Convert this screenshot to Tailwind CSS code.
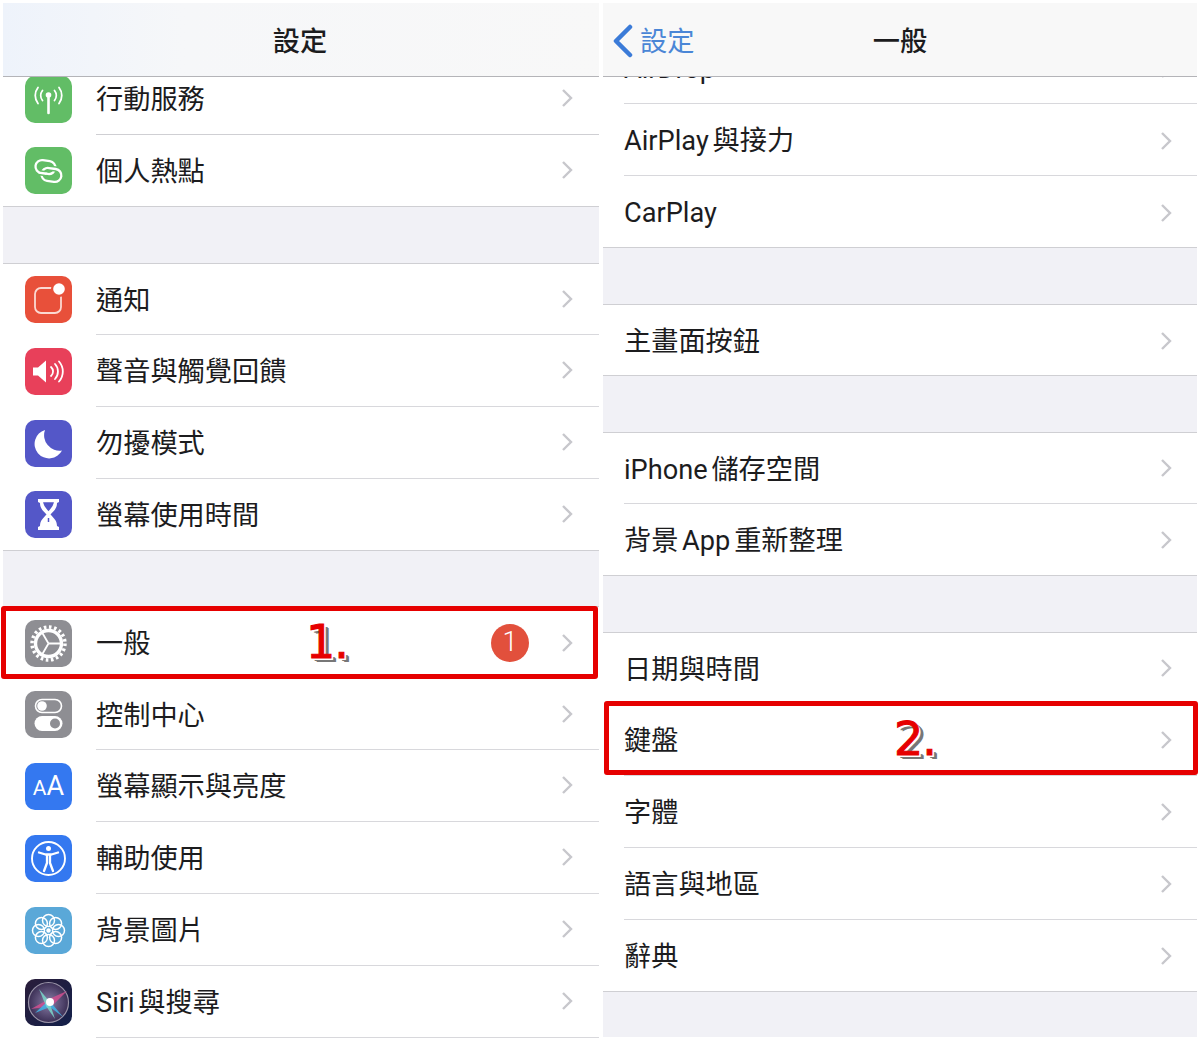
<!DOCTYPE html>
<html lang="zh-Hant">
<head>
<meta charset="UTF-8">
<title>設定</title>
<script src="https://cdn.jsdelivr.net/npm/@tailwindcss/browser@4"></script>
</head>
<body class="bg-white font-['Roboto','Noto_Sans_CJK_TC',sans-serif] text-[27.2px] leading-none [word-spacing:-3px] text-[#1c1c1e]">
<div class="flex gap-[4px] p-[3px] w-[1200px] h-[1040px] overflow-hidden">

  <!-- left: settings -->
  <div class="w-[596px] h-[1034px] bg-[#f1f1f6]">
    <div class="h-[74px] pt-[7px] pr-[2px] bg-gradient-to-r from-[#eef3fb] via-[#f6f7f9] via-30% to-[#f8f8f8] border-b border-[#b4b4b8] flex items-center justify-center font-medium">設定</div>

    <div class="overflow-hidden">
    <div class="-mt-[14px] bg-white border-b border-[#cfcfd3]">
      <div class="h-[72px] flex items-center pl-[22px]">
        <svg class="w-[47px] h-[47px] shrink-0" viewBox="0 0 47 47"><rect width="47" height="47" rx="10" fill="#62bd66"/><g fill="none" stroke="#fff" stroke-linecap="round"><path d="M23.5 20v17" stroke-width="2.6"/><path d="M17.5 14.5a8 8 0 0 0 0 10M29.5 14.5a8 8 0 0 1 0 10" stroke-width="1.8"/><path d="M13 11.5a13 13 0 0 0 0 16M34 11.5a13 13 0 0 1 0 16" stroke-width="1.8"/></g><circle cx="23.5" cy="19" r="2.8" fill="#fff"/></svg>
        <div class="ml-[24px] flex-1 h-full flex items-center justify-between pr-[26px] border-b border-[#cfcfd3]"><span class="pt-[5px]">行動服務</span><svg class="w-[12px] h-[20px] mb-[1px]" viewBox="0 0 12 20"><path d="M2 2l8 8-8 8" fill="none" stroke="#c7c7cc" stroke-width="2.4"/></svg></div>
      </div>
      <div class="h-[71px] flex items-center pl-[22px]">
        <svg class="w-[47px] h-[47px] shrink-0" viewBox="0 0 47 47"><rect width="47" height="47" rx="10" fill="#62bd66"/><g fill="none" transform="rotate(8 23.5 23.5)"><rect x="10" y="14" width="20" height="13" rx="6.500" stroke="#fff" stroke-width="2.300"/><path d="M26 21h6" stroke="#62bd66" stroke-width="5.500"/><rect x="17" y="21" width="20" height="13" rx="6.500" stroke="#fff" stroke-width="2.300"/><path d="M15 27h6" stroke="#62bd66" stroke-width="5.500"/><path d="M14 27h8" stroke="#fff" stroke-width="2.300"/></g></svg>
        <div class="ml-[24px] flex-1 h-full flex items-center justify-between pr-[26px]"><span class="pt-[5px]">個人熱點</span><svg class="w-[12px] h-[20px] mb-[1px]" viewBox="0 0 12 20"><path d="M2 2l8 8-8 8" fill="none" stroke="#c7c7cc" stroke-width="2.4"/></svg></div>
      </div>
    </div>
    </div>

    <div class="mt-[56px] bg-white border-y border-[#cfcfd3]">
      <div class="h-[71px] flex items-center pl-[22px]">
        <svg class="w-[47px] h-[47px] shrink-0" viewBox="0 0 47 47"><rect width="47" height="47" rx="10" fill="#e8503a"/><rect x="10" y="12" width="26" height="25" rx="6" fill="none" stroke="#fbd9d2" stroke-width="1.8"/><circle cx="34" cy="13" r="8" fill="#e8503a"/><circle cx="34" cy="13" r="5.800" fill="#fff"/></svg>
        <div class="ml-[24px] flex-1 h-full flex items-center justify-between pr-[26px] border-b border-[#d8d8dc]"><span class="pt-[5px]">通知</span><svg class="w-[12px] h-[20px] mb-[1px]" viewBox="0 0 12 20"><path d="M2 2l8 8-8 8" fill="none" stroke="#c7c7cc" stroke-width="2.4"/></svg></div>
      </div>
      <div class="h-[72px] flex items-center pl-[22px]">
        <svg class="w-[47px] h-[47px] shrink-0" viewBox="0 0 47 47"><rect width="47" height="47" rx="10" fill="#e8405a"/><path d="M8 19.500h5l8-7v22l-8-7H8z" fill="#fff"/><g fill="none" stroke="#fff" stroke-width="1.800" stroke-linecap="round"><path d="M26 19a6 6 0 0 1 0 9"/><path d="M30 16a11 11 0 0 1 0 15"/><path d="M34 13.500a15 15 0 0 1 0 20"/></g></svg>
        <div class="ml-[24px] flex-1 h-full flex items-center justify-between pr-[26px] border-b border-[#d8d8dc]"><span class="pt-[5px]">聲音與觸覺回饋</span><svg class="w-[12px] h-[20px] mb-[1px]" viewBox="0 0 12 20"><path d="M2 2l8 8-8 8" fill="none" stroke="#c7c7cc" stroke-width="2.4"/></svg></div>
      </div>
      <div class="h-[72px] flex items-center pl-[22px]">
        <svg class="w-[47px] h-[47px] shrink-0" viewBox="0 0 47 47"><rect width="47" height="47" rx="10" fill="#5457c8"/><path d="M20 10a14.500 14.500 0 1 0 17 20.500A15.500 15.500 0 0 1 20 10z" fill="#fff"/></svg>
        <div class="ml-[24px] flex-1 h-full flex items-center justify-between pr-[26px] border-b border-[#d8d8dc]"><span class="pt-[5px]">勿擾模式</span><svg class="w-[12px] h-[20px] mb-[1px]" viewBox="0 0 12 20"><path d="M2 2l8 8-8 8" fill="none" stroke="#c7c7cc" stroke-width="2.4"/></svg></div>
      </div>
      <div class="h-[71px] flex items-center pl-[22px]">
        <svg class="w-[47px] h-[47px] shrink-0" viewBox="0 0 47 47"><rect width="47" height="47" rx="10" fill="#5457c8"/><path d="M13 8h21v3l-2 1c0 6-4 8.500-6.500 11.500C28 26.500 32 29 32 35l2 1v3H13v-3l2-1c0-6 4-8.500 6.500-11.500C19 20.500 15 18 15 12l-2-1z" fill="#fff"/><path d="M19 12h9c-.5 3-3 5-4.500 7C22 17 19.500 15 19 12zM23.500 27v4" fill="#5457c8" stroke="#5457c8" stroke-width="1.500"/></svg>
        <div class="ml-[24px] flex-1 h-full flex items-center justify-between pr-[26px]"><span class="pt-[5px]">螢幕使用時間</span><svg class="w-[12px] h-[20px] mb-[1px]" viewBox="0 0 12 20"><path d="M2 2l8 8-8 8" fill="none" stroke="#c7c7cc" stroke-width="2.4"/></svg></div>
      </div>
    </div>

    <div class="mt-[55px] bg-white border-t border-[#cfcfd3]">
      <div class="relative h-[72px] flex items-center pl-[22px]">
        <svg class="w-[47px] h-[47px] shrink-0" viewBox="0 0 47 47"><rect width="47" height="47" rx="10" fill="#8e8e93"/><g fill="none" stroke="#fff"><circle cx="23.500" cy="23.500" r="16.500" stroke-width="3.500" stroke-dasharray="2.600 2.580"/><circle cx="23.500" cy="23.500" r="13" stroke-width="3.400"/><path d="M23.500 23.500H37M23.500 23.500L16.500 11.500M23.500 23.500L16.500 35.500" stroke-width="1.800"/></g></svg>
        <div class="ml-[24px] flex-1 h-full flex items-center pr-[26px]"><span class="pt-[3px]">一般</span><span class="ml-auto mr-[32px] w-[38px] h-[38px] rounded-full bg-[#e2503c] text-white flex items-center justify-center font-light">1</span><svg class="w-[12px] h-[20px] mb-[1px]" viewBox="0 0 12 20"><path d="M2 2l8 8-8 8" fill="none" stroke="#c7c7cc" stroke-width="2.4"/></svg></div>
        <div class="absolute -left-[2px] -top-[1px] w-[597px] h-[73px] border-[5px] border-[#e60000] rounded-[3px]"></div>
        <span class="absolute left-[303px] top-[5px] text-[46px] leading-[60px] tracking-[-1px] font-['DejaVu_Sans',sans-serif] text-[#e60000] [-webkit-text-stroke:1px_#e60000] [text-shadow:2px_2px_0_#fff,3px_3px_0_#777,4px_3px_0_#777,5px_4px_0_#777]">1.</span>
      </div>
      <div class="h-[71px] flex items-center pl-[22px]">
        <svg class="w-[47px] h-[47px] shrink-0" viewBox="0 0 47 47"><rect width="47" height="47" rx="10" fill="#8e8e93"/><rect x="10.500" y="8.500" width="26" height="13" rx="6.500" fill="none" stroke="#fff" stroke-width="1.600"/><circle cx="17" cy="15" r="4.800" fill="#fff"/><rect x="9.500" y="25" width="28" height="15" rx="7.500" fill="#fff"/><circle cx="30" cy="32.500" r="5" fill="#8e8e93"/></svg>
        <div class="ml-[24px] flex-1 h-full flex items-center justify-between pr-[26px] border-b border-[#d8d8dc]"><span class="pt-[5px]">控制中心</span><svg class="w-[12px] h-[20px] mb-[1px]" viewBox="0 0 12 20"><path d="M2 2l8 8-8 8" fill="none" stroke="#c7c7cc" stroke-width="2.4"/></svg></div>
      </div>
      <div class="h-[72px] flex items-center pl-[22px]">
        <div class="w-[47px] h-[47px] shrink-0 rounded-[10px] bg-[#3478f0] text-white flex items-baseline justify-center pt-[10px]"><span class="text-[21px]">A</span><span class="text-[27px]">A</span></div>
        <div class="ml-[24px] flex-1 h-full flex items-center justify-between pr-[26px] border-b border-[#d8d8dc]"><span class="pt-[5px]">螢幕顯示與亮度</span><svg class="w-[12px] h-[20px] mb-[1px]" viewBox="0 0 12 20"><path d="M2 2l8 8-8 8" fill="none" stroke="#c7c7cc" stroke-width="2.4"/></svg></div>
      </div>
      <div class="h-[72px] flex items-center pl-[22px]">
        <svg class="w-[47px] h-[47px] shrink-0" viewBox="0 0 47 47"><rect width="47" height="47" rx="10" fill="#3478f0"/><circle cx="23.500" cy="23.500" r="16.500" fill="none" stroke="#fff" stroke-width="1.900"/><circle cx="23.500" cy="13.500" r="2.500" fill="#fff"/><path d="M14 17.500l6.500 2h6l6.500-2M22 20v8l-3 8M25 20v8l3 8" fill="none" stroke="#fff" stroke-width="2.300" stroke-linecap="round" stroke-linejoin="round"/></svg>
        <div class="ml-[24px] flex-1 h-full flex items-center justify-between pr-[26px] border-b border-[#d8d8dc]"><span class="pt-[5px]">輔助使用</span><svg class="w-[12px] h-[20px] mb-[1px]" viewBox="0 0 12 20"><path d="M2 2l8 8-8 8" fill="none" stroke="#c7c7cc" stroke-width="2.4"/></svg></div>
      </div>
      <div class="h-[72px] flex items-center pl-[22px]">
        <svg class="w-[47px] h-[47px] shrink-0" viewBox="0 0 47 47"><rect width="47" height="47" rx="10" fill="#5aa8d8"/><g fill="none" stroke="#fff" stroke-width="1.500"><circle cx="23.500" cy="13.500" r="6"/><circle cx="23.500" cy="33.500" r="6"/><circle cx="13.500" cy="23.500" r="6"/><circle cx="33.500" cy="23.500" r="6"/><circle cx="16.400" cy="16.400" r="6"/><circle cx="30.600" cy="16.400" r="6"/><circle cx="16.400" cy="30.600" r="6"/><circle cx="30.600" cy="30.600" r="6"/></g><circle cx="23.500" cy="23.500" r="2.200" fill="#fff"/></svg>
        <div class="ml-[24px] flex-1 h-full flex items-center justify-between pr-[26px] border-b border-[#d8d8dc]"><span class="pt-[5px]">背景圖片</span><svg class="w-[12px] h-[20px] mb-[1px]" viewBox="0 0 12 20"><path d="M2 2l8 8-8 8" fill="none" stroke="#c7c7cc" stroke-width="2.4"/></svg></div>
      </div>
      <div class="h-[72px] flex items-center pl-[22px]">
        <svg class="w-[47px] h-[47px] shrink-0" viewBox="0 0 47 47"><defs><linearGradient id="siriBg" x1="0" y1="0" x2="1" y2="1"><stop offset="0" stop-color="#2a1d3a"/><stop offset="1" stop-color="#13204a"/></linearGradient><radialGradient id="siriDisc"><stop offset="0" stop-color="#8a7ea8"/><stop offset="1" stop-color="#3b2f55"/></radialGradient></defs><rect width="47" height="47" rx="10" fill="url(#siriBg)"/><circle cx="23.500" cy="23.500" r="20" fill="url(#siriDisc)" stroke="#9a94a8" stroke-width="1.200"/><path d="M6 30L24 20 42 12 27 27z" fill="#d0508f" opacity=".85"/><path d="M10 34L24 21 38 38 25 28z" fill="#3fb5e8" opacity=".85"/><path d="M14 10L24 22 30 40 21 27z" fill="#7de0d0" opacity=".8"/><circle cx="25" cy="23" r="4" fill="#fff"/></svg>
        <div class="ml-[24px] flex-1 h-full flex items-center justify-between pr-[26px] border-b border-[#d8d8dc]"><span class="pt-[5px]">Siri 與搜尋</span><svg class="w-[12px] h-[20px] mb-[1px]" viewBox="0 0 12 20"><path d="M2 2l8 8-8 8" fill="none" stroke="#c7c7cc" stroke-width="2.4"/></svg></div>
      </div>
    </div>
  </div>

  <!-- right: general -->
  <div class="w-[594px] h-[1034px] bg-[#f1f1f6]">
    <div class="relative h-[74px] pt-[7px] bg-[#f8f8f8] border-b border-[#b4b4b8] flex items-center justify-center font-medium">
      <div class="absolute left-[9px] top-[21px] flex items-center gap-[7px] font-normal text-[#4a86d6]"><svg class="w-[21px] h-[34px]" viewBox="0 0 21 34"><path d="M18 3L4 17l14 14" fill="none" stroke="#3b7bd8" stroke-width="4.500" stroke-linecap="round" stroke-linejoin="round"/></svg><span class="pt-[3px]">設定</span></div>
      <span>一般</span>
    </div>

    <div class="overflow-hidden">
    <div class="-mt-[45px] bg-white border-b border-[#cfcfd3]">
      <div class="h-[72px] ml-[21px] flex items-center justify-between pr-[25px] border-b border-[#d8d8dc]"><span class="pt-[5px]">AirDrop</span><svg class="w-[12px] h-[20px] mt-[2px]" viewBox="0 0 12 20"><path d="M2 2l8 8-8 8" fill="none" stroke="#c7c7cc" stroke-width="2.4"/></svg></div>
      <div class="h-[72px] ml-[21px] flex items-center justify-between pr-[25px] border-b border-[#d8d8dc]"><span class="pt-[5px]">AirPlay 與接力</span><svg class="w-[12px] h-[20px] mt-[2px]" viewBox="0 0 12 20"><path d="M2 2l8 8-8 8" fill="none" stroke="#c7c7cc" stroke-width="2.4"/></svg></div>
      <div class="h-[71px] ml-[21px] flex items-center justify-between pr-[25px]"><span class="pt-[5px]">CarPlay</span><svg class="w-[12px] h-[20px] mt-[2px]" viewBox="0 0 12 20"><path d="M2 2l8 8-8 8" fill="none" stroke="#c7c7cc" stroke-width="2.4"/></svg></div>
    </div>
    </div>

    <div class="mt-[56px] bg-white border-y border-[#cfcfd3]">
      <div class="h-[70px] ml-[21px] flex items-center justify-between pr-[25px]"><span class="pt-[5px]">主畫面按鈕</span><svg class="w-[12px] h-[20px] mt-[2px]" viewBox="0 0 12 20"><path d="M2 2l8 8-8 8" fill="none" stroke="#c7c7cc" stroke-width="2.4"/></svg></div>
    </div>

    <div class="mt-[56px] bg-white border-y border-[#cfcfd3]">
      <div class="h-[71px] ml-[21px] flex items-center justify-between pr-[25px] border-b border-[#d8d8dc]"><span class="pt-[5px]">iPhone 儲存空間</span><svg class="w-[12px] h-[20px]" viewBox="0 0 12 20"><path d="M2 2l8 8-8 8" fill="none" stroke="#c7c7cc" stroke-width="2.4"/></svg></div>
      <div class="h-[71px] ml-[21px] flex items-center justify-between pr-[25px]"><span class="pt-[5px]">背景 App 重新整理</span><svg class="w-[12px] h-[20px]" viewBox="0 0 12 20"><path d="M2 2l8 8-8 8" fill="none" stroke="#c7c7cc" stroke-width="2.4"/></svg></div>
    </div>

    <div class="mt-[56px] bg-white border-y border-[#cfcfd3]">
      <div class="h-[71px] ml-[21px] flex items-center justify-between pr-[25px] border-b border-[#d8d8dc]"><span class="pt-[5px]">日期與時間</span><svg class="w-[12px] h-[20px]" viewBox="0 0 12 20"><path d="M2 2l8 8-8 8" fill="none" stroke="#c7c7cc" stroke-width="2.4"/></svg></div>
      <div class="relative h-[72px] ml-[21px] flex items-center justify-between pr-[25px] border-b border-[#d8d8dc]"><span class="pt-[5px]">鍵盤</span><svg class="w-[12px] h-[20px]" viewBox="0 0 12 20"><path d="M2 2l8 8-8 8" fill="none" stroke="#c7c7cc" stroke-width="2.4"/></svg>
        <div class="absolute -left-[20px] -top-[3px] w-[594px] h-[74px] border-[5px] border-[#e60000] rounded-[3px]"></div>
        <span class="absolute left-[270px] top-[5px] text-[46px] leading-[60px] tracking-[-1px] font-['DejaVu_Sans',sans-serif] text-[#e60000] [-webkit-text-stroke:1px_#e60000] [text-shadow:2px_2px_0_#fff,3px_3px_0_#777,4px_3px_0_#777,5px_4px_0_#777]">2.</span>
      </div>
      <div class="h-[72px] ml-[21px] flex items-center justify-between pr-[25px] border-b border-[#d8d8dc]"><span class="pt-[5px]">字體</span><svg class="w-[12px] h-[20px]" viewBox="0 0 12 20"><path d="M2 2l8 8-8 8" fill="none" stroke="#c7c7cc" stroke-width="2.4"/></svg></div>
      <div class="h-[72px] ml-[21px] flex items-center justify-between pr-[25px] border-b border-[#d8d8dc]"><span class="pt-[5px]">語言與地區</span><svg class="w-[12px] h-[20px]" viewBox="0 0 12 20"><path d="M2 2l8 8-8 8" fill="none" stroke="#c7c7cc" stroke-width="2.4"/></svg></div>
      <div class="h-[71px] ml-[21px] flex items-center justify-between pr-[25px]"><span class="pt-[5px]">辭典</span><svg class="w-[12px] h-[20px]" viewBox="0 0 12 20"><path d="M2 2l8 8-8 8" fill="none" stroke="#c7c7cc" stroke-width="2.4"/></svg></div>
    </div>
  </div>
</div>
</body>
</html>
